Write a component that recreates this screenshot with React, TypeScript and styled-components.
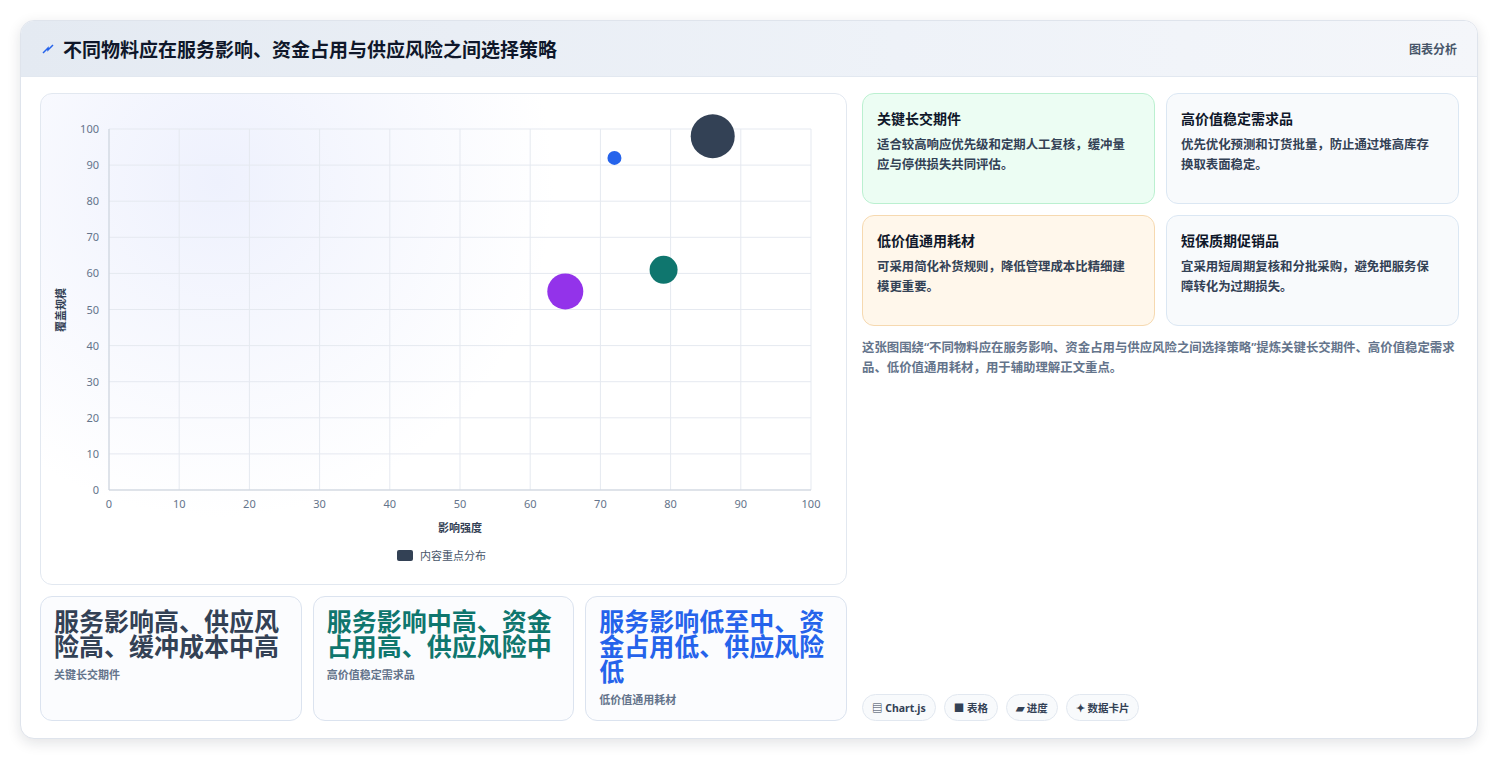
import * as React from 'react'
import styled, { createGlobalStyle } from 'styled-components'

const Global = createGlobalStyle`
  body { margin: 0; background: #f1f3f6; font-family: "Noto Sans", "Noto Sans CJK SC", sans-serif; }
`
const Page = styled.div`
  padding: 20px 20px 22px 20px;
  height: 761px;
  box-sizing: border-box;
  background: #fff;
`
const Card = styled.div`
  height: 719px;
  box-sizing: border-box;
  border: 1px solid #dfe4ec;
  border-radius: 14px;
  box-shadow: 0 4px 14px rgba(15, 23, 42, 0.12);
  overflow: hidden;
  display: flex;
  flex-direction: column;
  background: #fff;
`
const Header = styled.div`
  height: 55px;
  flex: none;
  display: flex;
  align-items: center;
  justify-content: space-between;
  padding: 0 20px 0 20px;
  background: linear-gradient(90deg, #e4eaf2, #eef2f8 60%, #f4f6fa);
  border-bottom: 1px solid #e2e8f0;
`
const Title = styled.h1`
  margin: 0;
  font-size: 19px;
  font-weight: 700;
  color: #0f172a;
  display: flex;
  align-items: center;
  gap: 8px;
`
const Tag = styled.span`
  font-size: 12px;
  color: #475569;
  font-weight: 600;
`
const Body = styled.div`
  flex: 1;
  display: grid;
  grid-template-columns: 807px 1fr;
  gap: 15px;
  padding: 16px 18px 18px 19px;
`
const LeftCol = styled.div`
  display: flex;
  flex-direction: column;
  gap: 11px;
`
const ChartPanel = styled.div`
  height: 492px;
  border: 1px solid #e2e8f0;
  border-radius: 12px;
  background: radial-gradient(circle at 22% 18%, #eef1fd, #fff 45%);
  box-sizing: border-box;
`
const Stats = styled.div`
  display: grid;
  grid-template-columns: repeat(3, 1fr);
  gap: 11px;
  height: 125px;
`
const Stat = styled.div`
  border: 1px solid #dbe3ef;
  border-radius: 12px;
  padding: 12px 13px;
  background: #fbfcfe;
`
const StatValue = styled.div<{ $c: string }>`
  font-size: 25px;
  font-weight: 700;
  line-height: 25px;
  color: ${p => p.$c};
`
const StatLabel = styled.div`
  font-size: 11px;
  color: #64748b;
  margin-top: 7px;
  font-weight: 600;
`
const RightCol = styled.div`
  display: flex;
  flex-direction: column;
`
const Grid = styled.div`
  display: grid;
  grid-template-columns: 1fr 1fr;
  gap: 11px;
`
const Note = styled.div<{ $bg: string; $bd: string }>`
  height: 111px;
  box-sizing: border-box;
  border: 1px solid ${p => p.$bd};
  background: ${p => p.$bg};
  border-radius: 12px;
  padding: 14px 18px 14px 14px;
`
const NoteTitle = styled.div`
  font-size: 14px;
  font-weight: 700;
  color: #0f172a;
  margin-bottom: 7px;
`
const NoteText = styled.div`
  font-size: 12.4px;
  line-height: 20px;
  color: #334155;
  font-weight: 600;
`
const Caption = styled.p`
  margin: 12px 0 0;
  font-size: 12.4px;
  line-height: 20px;
  color: #64748b;
  font-weight: 600;
`
const Chips = styled.div`
  margin-top: auto;
  display: flex;
  gap: 8px;
`
const Chip = styled.span`
  border: 1px solid #e2e8f0;
  background: #f8fafc;
  border-radius: 14px;
  padding: 5px 9px;
  font-size: 10.5px;
  font-weight: 700;
  color: #334155;
`

const X0 = 68, X1 = 770, Y0 = 35, Y1 = 396
const sx = (v: number) => X0 + ((X1 - X0) * v) / 100
const sy = (v: number) => Y1 - ((Y1 - Y0) * v) / 100
const ticks = [0, 10, 20, 30, 40, 50, 60, 70, 80, 90, 100]
const bubbles = [
  { x: 72, y: 92, r: 7, c: '#2563eb' },
  { x: 86, y: 98, r: 22, c: '#334155' },
  { x: 79, y: 61, r: 14, c: '#0f766e' },
  { x: 65, y: 55, r: 18, c: '#9333ea' },
]
const axisFont = { fontFamily: '"Noto Sans", sans-serif', fontSize: 11, fill: '#64748b' }

function Chart() {
  return (
    <svg width="805" height="490" style={{ display: 'block' }}>
      {ticks.map(t => (
        <g key={t}>
          <line x1={X0} x2={X1} y1={sy(t)} y2={sy(t)} stroke="#e5e9f0" />
          <line x1={sx(t)} x2={sx(t)} y1={Y0} y2={Y1} stroke="#e5e9f0" />
          <text x={X0 - 10} y={sy(t) + 4} textAnchor="end" {...axisFont}>{t}</text>
          <text x={sx(t)} y={Y1 + 18} textAnchor="middle" {...axisFont}>{t}</text>
        </g>
      ))}
      <line x1={X0} x2={X1} y1={Y1} y2={Y1} stroke="#cbd2dc" />
      <line x1={X0} x2={X0} y1={Y0} y2={Y1} stroke="#cbd2dc" />
      {bubbles.map((b, i) => (
        <circle key={i} cx={sx(b.x)} cy={sy(b.y)} r={b.r} fill={b.c} />
      ))}
      <text x={419} y={438} textAnchor="middle" style={{ fontSize: 11, fontWeight: 700, fill: '#334155', fontFamily: '"Noto Sans CJK SC", sans-serif' }}>影响强度</text>
      <text transform="translate(24 216) rotate(-90)" textAnchor="middle" style={{ fontSize: 11, fontWeight: 700, fill: '#334155', fontFamily: '"Noto Sans CJK SC", sans-serif' }}>覆盖规模</text>
      <rect x={356} y={456} width={16} height={11} rx={2} fill="#334155" />
      <text x={379} y={466} style={{ fontSize: 11, fill: '#475569', fontFamily: '"Noto Sans CJK SC", sans-serif' }}>内容重点分布</text>
    </svg>
  )
}

export default function App() {
  return (
    <Page>
      <Global />
      <Card>
        <Header>
          <Title>
            <svg width="14" height="14" viewBox="0 0 14 14"><path d="M2 11 L7 6 L7 8 L12 3" stroke="#2563eb" strokeWidth="1.5" fill="none" /></svg>
            不同物料应在服务影响、资金占用与供应风险之间选择策略
          </Title>
          <Tag>图表分析</Tag>
        </Header>
        <Body>
          <LeftCol>
            <ChartPanel><Chart /></ChartPanel>
            <Stats>
              <Stat><StatValue $c="#334155">服务影响高、供应风险高、缓冲成本中高</StatValue><StatLabel>关键长交期件</StatLabel></Stat>
              <Stat><StatValue $c="#0f766e">服务影响中高、资金占用高、供应风险中</StatValue><StatLabel>高价值稳定需求品</StatLabel></Stat>
              <Stat><StatValue $c="#2563eb">服务影响低至中、资金占用低、供应风险低</StatValue><StatLabel>低价值通用耗材</StatLabel></Stat>
            </Stats>
          </LeftCol>
          <RightCol>
            <Grid>
              <Note $bg="#ecfdf3" $bd="#bbf0d0"><NoteTitle>关键长交期件</NoteTitle><NoteText>适合较高响应优先级和定期人工复核，缓冲量应与停供损失共同评估。</NoteText></Note>
              <Note $bg="#f8fafc" $bd="#dbe7f3"><NoteTitle>高价值稳定需求品</NoteTitle><NoteText>优先优化预测和订货批量，防止通过堆高库存换取表面稳定。</NoteText></Note>
              <Note $bg="#fff7eb" $bd="#f6d9b0"><NoteTitle>低价值通用耗材</NoteTitle><NoteText>可采用简化补货规则，降低管理成本比精细建模更重要。</NoteText></Note>
              <Note $bg="#f8fafc" $bd="#dbe7f3"><NoteTitle>短保质期促销品</NoteTitle><NoteText>宜采用短周期复核和分批采购，避免把服务保障转化为过期损失。</NoteText></Note>
            </Grid>
            <Caption>这张图围绕“不同物料应在服务影响、资金占用与供应风险之间选择策略”提炼关键长交期件、高价值稳定需求品、低价值通用耗材，用于辅助理解正文重点。</Caption>
            <Chips>
              <Chip>▤ Chart.js</Chip>
              <Chip>■ 表格</Chip>
              <Chip>▰ 进度</Chip>
              <Chip>✦ 数据卡片</Chip>
            </Chips>
          </RightCol>
        </Body>
      </Card>
    </Page>
  )
}
